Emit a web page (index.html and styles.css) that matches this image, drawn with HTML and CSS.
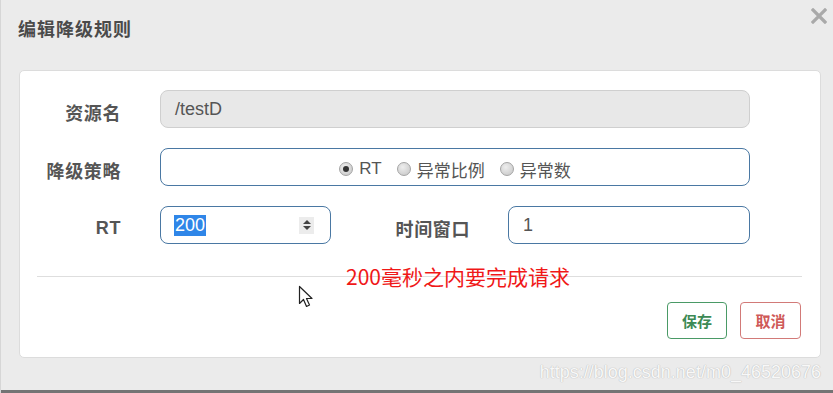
FILE: index.html
```html
<!DOCTYPE html>
<html lang="zh-CN">
<head>
    <meta charset="UTF-8">
    <title>编辑降级规则</title>
    <link rel="stylesheet" href="styles.css">
</head>
<body>
    <div class="pagina">
        <div class="cabecalho">
            <h4 class="titulo">编辑降级规则</h4>
            <span class="fechar">
                <svg width="16" height="16" viewBox="0 0 16 16">
                    <path d="M2 2 L14 14 M14 2 L2 14" stroke="#a9a9a9" stroke-width="3.2" stroke-linecap="square"/>
                </svg>
            </span>
        </div>

        <div class="painel">
            <div class="linha">
                <label class="rotulo">资源名</label>
                <div class="campo desativado larga">/testD</div>
            </div>
            <div class="linha">
                <label class="rotulo">降级策略</label>
                <div class="campo larga radios">
                    <span class="radio marcado"></span><span class="txt">RT</span>
                    <span class="radio"></span><span class="txt">异常比例</span>
                    <span class="radio"></span><span class="txt">异常数</span>
                </div>
            </div>
            <div class="linha">
                <label class="rotulo">RT</label>
                <div class="campo curta">
                    <span class="selecao">200</span>
                    <span class="spinner">
                        <i class="cima"></i>
                        <i class="baixo"></i>
                    </span>
                </div>
                <label class="rotulo janela">时间窗口</label>
                <div class="campo media">1</div>
            </div>

            <div class="divisor"></div>

            <div class="acoes">
                <button class="btn salvar">保存</button>
                <button class="btn cancelar">取消</button>
            </div>
        </div>

        <div class="marca">https://blog.csdn.net/m0_46520676</div>
        <div class="rodape"></div>

        <p class="nota">200毫秒之内要完成请求</p>
        <svg class="cursor" width="18" height="24" viewBox="0 0 18 24">
            <path d="M1.5 1.5 L1.5 18.5 L5.5 14.5 L8.5 21.5 L11.5 20 L8.5 13.5 L14 13.5 Z" fill="#fff" stroke="#222" stroke-width="1.2" stroke-linejoin="round"/>
        </svg>
    </div>
</body>
</html>
```

FILE: styles.css
```css
* {
    box-sizing: border-box;
}

body {
    margin: 0;
    background-color: #ebebeb;
    font-family: "Liberation Sans", "Noto Sans CJK SC", sans-serif;
}

.pagina {
    position: relative;
    display: flex;
    flex-direction: column;
    height: 393px;
    border-left: 1px solid #d6d6d6;
}

.cabecalho {
    display: flex;
    justify-content: space-between;
    align-items: flex-start;
    height: 70px;
    padding: 8px 6px 0 17px;
}

.titulo {
    margin: 11px 0 0 0;
    font-size: 18px;
    line-height: 22px;
    letter-spacing: 1px;
    font-weight: bold;
    color: #4a4a4a;
}

.fechar {
    display: flex;
}

.painel {
    margin: 0 12px 0 18px;
    height: 288px;
    background-color: #fff;
    border: 1px solid #dcdcdc;
    border-radius: 5px;
    padding-top: 19px;
}

.linha {
    display: flex;
    align-items: center;
    height: 38px;
    margin-bottom: 20px;
}

.rotulo {
    width: 101px;
    margin-right: 39px;
    margin-top: 6px;
    text-align: right;
    font-size: 18px;
    letter-spacing: 0.6px;
    font-weight: bold;
    color: #555;
}

.rotulo.janela {
    width: 100px;
    margin-left: 39px;
    margin-right: 38px;
}

.campo {
    display: flex;
    align-items: center;
    height: 38px;
    padding-left: 14px;
    border: 1.5px solid #4a78a3;
    border-radius: 8px;
    font-size: 18px;
    color: #555;
}

.larga {
    width: 590px;
}

.curta {
    width: 171px;
    justify-content: space-between;
    padding-right: 16px;
}

.media {
    width: 242px;
}

.desativado {
    background-color: #e8e8e8;
    border: 1px solid #cfcfcf;
}

.radios {
    justify-content: center;
    padding-left: 0;
    padding-top: 4px;
    font-size: 17px;
    color: #555;
}

.radio {
    flex: none;
    width: 14px;
    height: 14px;
    border-radius: 50%;
    border: 1px solid #a4a4a4;
    background: radial-gradient(circle at 40% 35%, #eeeeee, #c4c4c4);
    margin-right: 6px;
    display: flex;
    align-items: center;
    justify-content: center;
}

.radio.marcado::after {
    content: "";
    width: 6px;
    height: 6px;
    border-radius: 50%;
    background-color: #333;
}

.txt {
    margin-right: 15px;
}

.txt:last-child {
    margin-right: 0;
}

.selecao {
    background-color: #2f86e8;
    color: #fff;
    line-height: 21px;
    padding: 0 1px;
    margin-left: -1px;
}

.spinner {
    display: flex;
    flex-direction: column;
    align-items: center;
    justify-content: center;
    gap: 2px;
    width: 15px;
    height: 17px;
    background-color: #ececec;
}

.spinner i {
    width: 0;
    height: 0;
    border-left: 4px solid transparent;
    border-right: 4px solid transparent;
}

.spinner .cima {
    border-bottom: 4px solid #444;
}

.spinner .baixo {
    border-top: 4px solid #444;
}

/* a margem do .linha colapsa com esta, por isso 32 */
.divisor {
    height: 1px;
    margin: 32px 18px 0 17px;
    background-color: #dedede;
}

.acoes {
    display: flex;
    justify-content: flex-end;
    gap: 13px;
    padding-right: 19px;
    margin-top: 25px;
}

.btn {
    width: 61px;
    height: 37px;
    background-color: #fff;
    border-radius: 4px;
    font-family: "Noto Sans CJK SC", sans-serif;
    font-size: 15px;
    font-weight: bold;
    cursor: pointer;
}

.salvar {
    width: 60px;
    border: 1.5px solid #4a9a66;
    color: #3d8a55;
}

.cancelar {
    border: 1.5px solid #d27a78;
    color: #cf5a58;
    font-weight: 600;
}

.marca {
    flex: 1;
    text-align: right;
    padding: 4px 12px 0 0;
    font-size: 18px;
    color: #f8f8f8;
    text-shadow: 0 0 1px #b8b8b8, 0 0 1px #c4c4c4;
}

.rodape {
    height: 3px;
    background-color: #747474;
}

.nota {
    position: absolute;
    left: 345px;
    top: 263px;
    margin: 0;
    font-family: "Noto Sans CJK SC", sans-serif;
    font-size: 21px;
    line-height: 26px;
    color: #f01818;
}

.cursor {
    position: absolute;
    left: 297px;
    top: 285px;
}
```
